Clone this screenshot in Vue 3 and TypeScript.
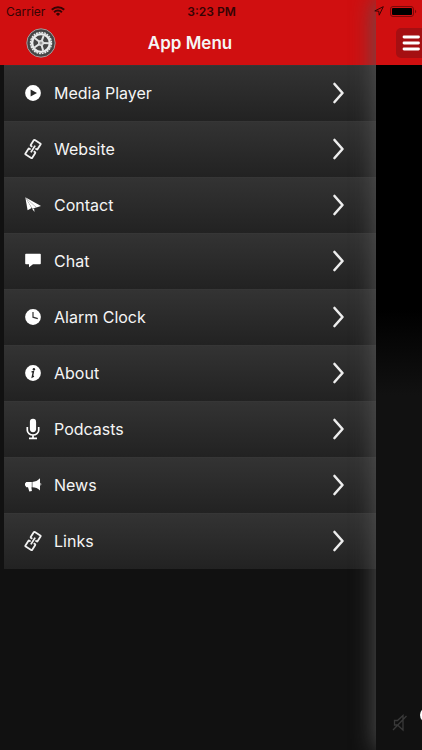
<script setup lang="ts">
type IconName = 'play' | 'link' | 'plane' | 'chat' | 'clock' | 'info' | 'mic' | 'horn'

interface MenuItem {
  label: string
  icon: IconName
}

const items: MenuItem[] = [
  { label: 'Media Player', icon: 'play' },
  { label: 'Website', icon: 'link' },
  { label: 'Contact', icon: 'plane' },
  { label: 'Chat', icon: 'chat' },
  { label: 'Alarm Clock', icon: 'clock' },
  { label: 'About', icon: 'info' },
  { label: 'Podcasts', icon: 'mic' },
  { label: 'News', icon: 'horn' },
  { label: 'Links', icon: 'link' },
]

const spokes: number[] = [20, 92, 164, 236, 308]
</script>

<template>
  <div class="screen">
    <div class="status">
      <div class="carrier">
        <span>Carrier</span>
        <svg width="14" height="10" viewBox="0 0 14 10" aria-hidden="true">
          <g fill="none" stroke="currentColor" stroke-width="2">
            <path d="M.8 3.7a8.8 8.8 0 0 1 12.4 0" />
            <path d="M3.1 6.2a5.5 5.5 0 0 1 7.8 0" />
          </g>
          <path d="M4.9 7.9a3 3 0 0 1 4.2 0L7 10z" fill="currentColor" />
        </svg>
      </div>
      <time class="time">3:23 PM</time>
      <div class="power">
        <svg width="10" height="10" viewBox="0 0 10 10" aria-hidden="true">
          <path d="M9.3 .7 .8 4.9l4 .3.4 4z" fill="none" stroke="currentColor" stroke-linejoin="round" />
        </svg>
        <svg width="27" height="11" viewBox="0 0 27 11" aria-hidden="true">
          <rect x=".5" y=".5" width="23" height="10" rx="2.5" fill="none" stroke="#7c0808" />
          <rect x="2" y="2" width="20" height="7" rx="1" fill="#000" />
          <path d="M25 3.8c1.6.5 1.6 2.9 0 3.4z" fill="#7c0808" />
        </svg>
      </div>
    </div>

    <section class="menu">
      <header class="bar">
        <svg class="logo" width="30" height="30" viewBox="0 0 30 30" aria-hidden="true">
          <circle cx="15" cy="15" r="14.2" fill="#454545" stroke="#a99a9a" />
          <circle cx="15" cy="15" r="10.5" fill="none" stroke="#e8eaea" stroke-width="1.4" stroke-dasharray="1.9 .85" />
          <circle cx="15" cy="15" r="8.9" fill="none" stroke="#e8eaea" stroke-width="2.4" />
          <g stroke="#e2e4e4" stroke-width="2">
            <path v-for="angle in spokes" :key="angle" d="M15 13V7" :transform="`rotate(${angle} 15 15)`" />
          </g>
          <circle cx="15" cy="15" r="3" fill="#dcdede" />
          <circle cx="15" cy="15" r="1.5" fill="#999" />
        </svg>
        <h1>App Menu</h1>
      </header>
      <nav class="list">
        <a v-for="item in items" :key="item.label" class="item" href="#">
          <svg class="icon" width="18" height="22" viewBox="0 0 18 22" aria-hidden="true">
            <template v-if="item.icon === 'play'">
              <circle cx="9" cy="11" r="7.9" fill="#fff" />
              <path d="M6.6 7.4v7.2l6.4-3.6z" fill="#272727" />
            </template>
            <g
              v-else-if="item.icon === 'link'"
              fill="none"
              stroke="#f2f2f2"
              stroke-width="1.8"
              stroke-linejoin="round"
              transform="rotate(32 9 11)"
            >
              <path d="M7.2 9.4H5.8q-.8 0-.8-.8V3.200q0-.8.800-.8h6.400q.8 0 .8.8v5.400q0 .8-.8.8h-1.400" />
              <path d="M7.200 12.600H5.800q-.8 0-.8.800v5.400q0 .8.800.8h6.400q.8 0 .8-.8v-5.400q0-.8-.8-.8h-1.400" />
              <path d="M9 7v8" />
            </g>
            <g v-else-if="item.icon === 'plane'" fill="#fff">
              <path d="M1.300 3.300 17 12l-4.600 1.500z" />
              <path d="M1.300 3.300 3.600 16.200l4.100-2.300z" />
              <path d="m1.300 3.300 10.900 10.200-3.800 1.200z" />
              <path d="m8.400 15.200 1.700-.6.400 3.400z" />
            </g>
            <path
              v-else-if="item.icon === 'chat'"
              d="M2 3.700h14a.8.8 0 0 1 .8.8v9a.8.8 0 0 1-.8.8H9l-4 3v-3H2a.8.8 0 0 1-.8-.8v-9a.8.8 0 0 1 .8-.8z"
              fill="#fff"
            />
            <template v-else-if="item.icon === 'clock'">
              <circle cx="9" cy="11" r="7.9" fill="#fff" />
              <path d="M9 6v5.2l4.8 1.4" fill="none" stroke="#333" stroke-width="1.2" />
            </template>
            <template v-else-if="item.icon === 'info'">
              <circle cx="9" cy="11" r="7.9" fill="#fff" />
              <circle cx="9.9" cy="7.2" r="1.2" fill="#222" />
              <path d="M7.5 9.9 9.4 9.6 8.3 15l1.6-.9" fill="none" stroke="#222" stroke-width="1.4" />
            </template>
            <g v-else-if="item.icon === 'mic'">
              <rect x="5.9" y=".8" width="6.2" height="13.4" rx="3.1" fill="#fff" />
              <path d="M3.3 9v3.3a5.7 4.7 0 0 0 11.4 0V9M9 17v3.5M5 20.3h8" fill="none" stroke="#fff" stroke-width="1.7" />
            </g>
            <g v-else fill="#fff">
              <path d="M16 4.2v12.4c-2.3-2.3-4.6-3.2-7.6-3.3V7.9c3-.2 5.3-1.4 7.6-3.7z" />
              <path d="M2.3 7.9h5.5v5.4l-.4.2.5 3.6-2.6.4-1.3-4.2H2.3L1 11.2V9.6z" />
              <path d="M16.5 8.8c1 .4 1 2.6 0 3z" />
            </g>
          </svg>
          <span class="label">{{ item.label }}</span>
          <svg class="chevron" width="14" height="24" viewBox="0 0 14 24" aria-hidden="true">
            <path d="m2.5 3 8 9-8 9" fill="none" stroke="#ededed" stroke-width="2.6" stroke-linecap="round" stroke-linejoin="round" />
          </svg>
        </a>
      </nav>
    </section>

    <section class="player" aria-label="Player">
      <div class="player-bar">
        <button class="burger" type="button" aria-label="Close menu">
          <svg width="18" height="16" viewBox="0 0 18 16" aria-hidden="true">
            <path d="M2 2h14.5M2 8h14.5M2 14h14.5" stroke="#fff" stroke-width="2.8" stroke-linecap="round" />
          </svg>
        </button>
      </div>
      <div class="art"></div>
      <div class="volume">
        <svg class="mute" width="16" height="18" viewBox="0 0 16 18" aria-hidden="true">
          <path d="M2.5 6.5h3L11 1.5v14.500L5.500 11h-3zM1 16 14.500 2" fill="none" stroke="#393939" stroke-width="1.3" />
        </svg>
        <span class="knob"></span>
      </div>
    </section>
  </div>
</template>

<style>
body {
  background: #111;
}
</style>

<style scoped>
.screen {
  position: relative;
  display: flex;
  min-height: 100vh;
  overflow: hidden;
  background: #111;
  color: #f5f5f5;
  font-family: Inter, 'Liberation Sans', sans-serif;
}

.status {
  position: absolute;
  inset: 0 0 auto;
  z-index: 2;
  display: grid;
  grid-template-columns: 1fr auto 1fr;
  align-items: center;
  height: 22px;
  padding: 0 5px 0 6px;
  color: #350404;
  font-size: 12px;
}

.carrier,
.power {
  display: flex;
  align-items: center;
  gap: 6px;
}

.power {
  justify-content: flex-end;
}

.time {
  font-weight: 600;
}

.menu {
  flex: 1;
  min-width: 0;
  padding-left: 4px;
  background: linear-gradient(#d00f10 65px, transparent 65px);
}

.bar {
  box-sizing: border-box;
  display: grid;
  grid-template-columns: 1fr auto 1fr;
  align-items: center;
  height: 65px;
  padding: 21px 22px 0;
}

h1 {
  margin: 0;
  font-size: 17px;
  font-weight: 600;
  line-height: 22px;
}

.item {
  box-sizing: border-box;
  display: flex;
  align-items: center;
  height: 56px;
  padding: 0 30px 1px 20px;
  border-top: 1px solid #363636;
  background: linear-gradient(#333, #222);
  color: inherit;
  text-decoration: none;
}

.label {
  flex: 1;
  margin-left: 12px;
  font-size: 16px;
  line-height: 22px;
}

.player {
  position: relative;
  display: flex;
  flex-direction: column;
  width: 46px;
  background: #111;
  box-shadow: 0 0 24px #555;
}

.player-bar {
  box-sizing: border-box;
  height: 65px;
  padding: 28px 0 0 20px;
  overflow: hidden;
  background: #d00f10;
}

.burger {
  display: flex;
  align-items: center;
  width: 36px;
  height: 30px;
  padding: 0 6px;
  border: 0;
  border-radius: 5px;
  background: #a50f12;
}

.art {
  height: 330px;
  background: linear-gradient(#000 74%, #111);
}

.volume {
  display: flex;
  align-items: flex-end;
  gap: 12px;
  margin-top: auto;
  padding: 0 0 18px 16px;
  overflow: hidden;
}

.mute {
  flex: none;
}

.knob {
  flex: none;
  width: 16px;
  height: 16px;
  margin-bottom: 9px;
  border-radius: 50%;
  background: #fff;
}
</style>
